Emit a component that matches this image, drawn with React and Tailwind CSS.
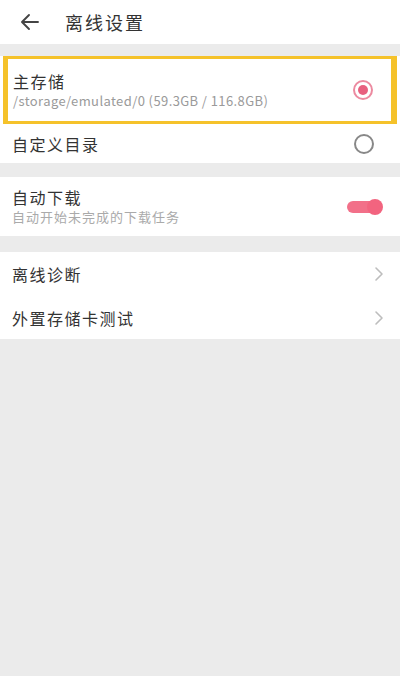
import React from 'react';

const font = { fontFamily: '"Noto Sans CJK SC", "Noto Sans", sans-serif' };

const Chevron = () => (
  <svg width="10" height="16" viewBox="0 0 10 16" fill="none">
    <path d="M2 2l6 6-6 6" stroke="#bdbdbd" strokeWidth="1.6" strokeLinecap="round" strokeLinejoin="round" />
  </svg>
);

const App = () => {
  return (
    <div className="w-[400px] h-[676px] bg-[#ebebeb] flex flex-col" style={font}>
      {/* Header */}
      <div className="h-[44px] bg-white flex items-center shrink-0">
        <svg className="ml-[20px]" width="20" height="18" viewBox="0 0 20 18" fill="none">
          <path d="M18 9H3M9 2L2 9l7 7" stroke="#444" strokeWidth="1.9" strokeLinecap="round" strokeLinejoin="round" />
        </svg>
        <span className="ml-[25px] text-[18px] tracking-[2px] text-[#333] leading-none">离线设置</span>
      </div>

      {/* Storage section */}
      <div className="mt-[12px] bg-white">
        <div className="mx-[3px] h-[68px] border-[#f5c22a] border-t-[3px] border-b-[3px] border-l-[5px] border-r-[6px] flex items-center justify-between">
          <div className="pl-[5px] flex flex-col">
            <span className="text-[16px] tracking-[1.5px] text-[#333] leading-[22px]">主存储</span>
            <span className="text-[13px] tracking-[0.4px] text-[#9a9a9a] leading-[18px]">/storage/emulated/0 (59.3GB / 116.8GB)</span>
          </div>
          <div className="mr-[18px] w-[20px] h-[20px] rounded-full border-2 border-[#ec8aa0] flex items-center justify-center">
            <div className="w-[10px] h-[10px] rounded-full bg-[#e8607f]" />
          </div>
        </div>
        <div className="h-[39px] flex items-center justify-between pl-[12px] pr-[26px]">
          <span className="text-[16px] tracking-[1.5px] text-[#333]">自定义目录</span>
          <div className="w-[20px] h-[20px] rounded-full border-2 border-[#888]" />
        </div>
      </div>

      {/* Auto download */}
      <div className="mt-[14px] h-[59px] bg-white flex items-center justify-between pl-[12px] pr-[17px]">
        <div className="flex flex-col">
          <span className="text-[16px] tracking-[1.5px] text-[#333] leading-[21px]">自动下载</span>
          <span className="text-[13px] tracking-[1px] text-[#aaa] leading-[18px]">自动开始未完成的下载任务</span>
        </div>
        <div className="relative w-[36px] h-[16px] flex items-center">
          <div className="w-[34px] h-[12px] rounded-full bg-[#f27089]" />
          <div className="absolute right-0 top-0 w-[16px] h-[16px] rounded-full bg-[#f2647f]" />
        </div>
      </div>

      {/* Diagnostics */}
      <div className="mt-[16px] bg-white flex flex-col">
        <div className="h-[44px] flex items-center justify-between pl-[12px] pr-[16px]">
          <span className="text-[16px] tracking-[1.5px] text-[#333]">离线诊断</span>
          <Chevron />
        </div>
        <div className="h-[43px] flex items-center justify-between pl-[12px] pr-[16px]">
          <span className="text-[16px] tracking-[1.5px] text-[#333]">外置存储卡测试</span>
          <Chevron />
        </div>
      </div>
    </div>
  );
};

export default App;
